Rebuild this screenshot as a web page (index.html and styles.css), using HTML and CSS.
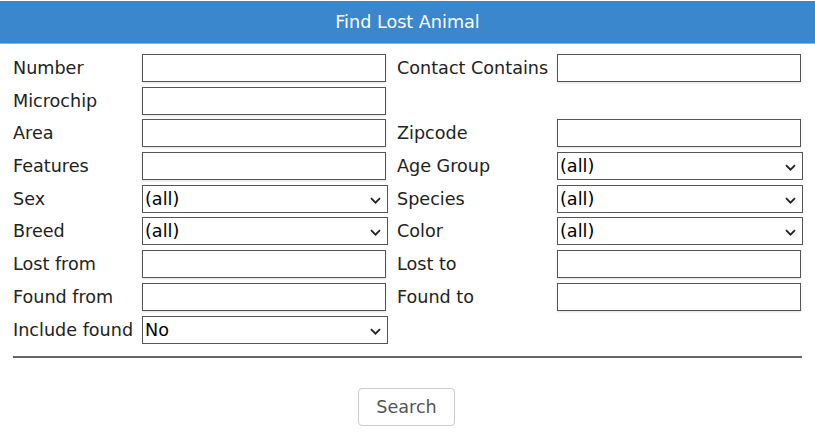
FILE: index.html
```html
<!DOCTYPE html>
<html>
<head>
<meta charset="utf-8">
<link rel="stylesheet" href="styles.css">
</head>
<body>
<div class="header">Find Lost Animal</div>
<form class="search">
  <div class="grid">
    <label class="lbl">Number</label>
    <div class="ctl"><input class="txt" type="text"></div>
    <label class="lbl lbl-r">Contact Contains</label>
    <div class="ctl"><input class="txt" type="text"></div>

    <label class="lbl">Microchip</label>
    <div class="ctl"><input class="txt" type="text"></div>
    <div class="lbl lbl-r"></div>
    <div class="ctl"></div>

    <label class="lbl">Area</label>
    <div class="ctl"><input class="txt" type="text"></div>
    <label class="lbl lbl-r">Zipcode</label>
    <div class="ctl"><input class="txt" type="text"></div>

    <label class="lbl">Features</label>
    <div class="ctl"><input class="txt" type="text"></div>
    <label class="lbl lbl-r">Age Group</label>
    <div class="ctl"><select class="sel"><option>(all)</option></select></div>

    <label class="lbl">Sex</label>
    <div class="ctl"><select class="sel"><option>(all)</option></select></div>
    <label class="lbl lbl-r">Species</label>
    <div class="ctl"><select class="sel"><option>(all)</option></select></div>

    <label class="lbl">Breed</label>
    <div class="ctl"><select class="sel"><option>(all)</option></select></div>
    <label class="lbl lbl-r">Color</label>
    <div class="ctl"><select class="sel"><option>(all)</option></select></div>

    <label class="lbl">Lost from</label>
    <div class="ctl"><input class="txt" type="text"></div>
    <label class="lbl lbl-r">Lost to</label>
    <div class="ctl"><input class="txt" type="text"></div>

    <label class="lbl">Found from</label>
    <div class="ctl"><input class="txt" type="text"></div>
    <label class="lbl lbl-r">Found to</label>
    <div class="ctl"><input class="txt" type="text"></div>

    <label class="lbl">Include found</label>
    <div class="ctl"><select class="sel"><option>No</option></select></div>
  </div>
  <hr class="rule">
  <div class="actions">
    <button type="button" class="btn">Search</button>
  </div>
</form>
</body>
</html>
```

FILE: styles.css
```css
html, body {
  margin: 0;
  padding: 0;
  background: #fff;
}
body {
  font-family: "DejaVu Sans", Verdana, sans-serif;
  font-size: 17.6px;
  color: #222;
}
.header {
  margin-top: 1px;
  height: 42px;
  line-height: 42px;
  background: #3a87cd;
  border-bottom: 1px solid #aaaaaa;
  color: #fff;
  text-align: center;
  font-size: 17.6px;
}
.search {
  margin: 0;
  padding: 7.675px 13px 0 13px;
}
.grid {
  display: grid;
  grid-template-columns: 129px 246px 169px 246px;
  grid-auto-rows: 32.7px;
  align-items: center;
}
.lbl {
  white-space: nowrap;
  color: #222;
}
.lbl-r {
  padding-left: 9px;
}
.ctl {
  display: flex;
  align-items: center;
}
.txt {
  box-sizing: border-box;
  width: 244px;
  height: 28px;
  margin: 0;
  padding: 2px 3px;
  border: 1px solid #555;
  border-radius: 0;
  background: #fff;
  font-family: inherit;
  font-size: 17.6px;
  box-shadow: 0 1px 2px rgba(0, 0, 0, 0.12);
  outline: none;
}
.sel {
  -webkit-appearance: none;
  appearance: none;
  box-sizing: border-box;
  width: 246px;
  height: 28px;
  margin: 0;
  padding: 0 24px 0 2px;
  border: 1px solid #555;
  border-radius: 0;
  background-color: #fff;
  background-image: url("data:image/svg+xml;utf8,<svg xmlns='http://www.w3.org/2000/svg' width='11' height='7' viewBox='0 0 11 7'><path d='M1 1.2 L5.5 5.7 L10 1.2' fill='none' stroke='%23222' stroke-width='1.8'/></svg>");
  background-repeat: no-repeat;
  background-position: right 6px top 11px;
  background-size: 11px 7px;
  font-family: inherit;
  font-size: 17.6px;
  color: #000;
}
.rule {
  margin: 10.5px 0 0 0;
  border: 0;
  height: 2px;
  background: #666;
}
.actions {
  display: flex;
  justify-content: center;
  padding-top: 30px;
  padding-right: 2px;
}
.btn {
  box-sizing: border-box;
  width: 97px;
  height: 38px;
  margin: 0;
  padding: 0;
  border: 1px solid #cccccc;
  border-radius: 4px;
  background: #fff;
  color: #555;
  font-family: inherit;
  font-size: 17.6px;
}
```
